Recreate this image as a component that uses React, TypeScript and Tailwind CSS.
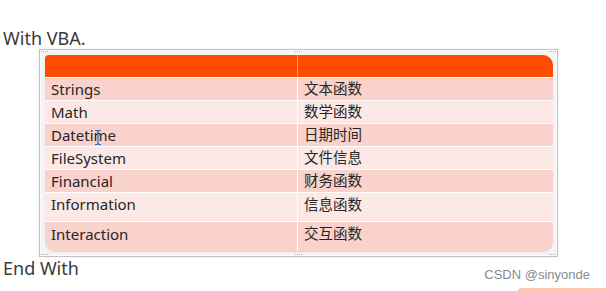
import React from "react";

const rows = [
  { en: "Strings", zh: "文本函数", dark: true, h: "h-[23px]" },
  { en: "Math", zh: "数学函数", dark: false, h: "h-[23px]" },
  { en: "Datetime", zh: "日期时间", dark: true, h: "h-[23px]" },
  { en: "FileSystem", zh: "文件信息", dark: false, h: "h-[23px]" },
  { en: "Financial", zh: "财务函数", dark: true, h: "h-[23px]" },
  { en: "Information", zh: "信息函数", dark: false, h: "h-[29px]", top: true },
  { en: "Interaction", zh: "交互函数", dark: true, h: "h-[30px]", last: true },
];

const font = { fontFamily: '"Noto Sans", "Noto Sans CJK SC", sans-serif' };

// little resize-handle dots on the frame
function Dots({ className }: { className: string }) {
  return (
    <div className={`absolute flex gap-[1px] ${className}`}>
      <span className="w-[1px] h-[1px] bg-[#b5b5b5]" />
      <span className="w-[1px] h-[1px] bg-[#b5b5b5]" />
      <span className="w-[1px] h-[1px] bg-[#b5b5b5]" />
      <span className="w-[1px] h-[1px] bg-[#b5b5b5]" />
    </div>
  );
}

export default function App() {
  return (
    <div
      className="w-[606px] h-[291px] bg-white relative overflow-hidden text-[#262626]"
      style={font}
    >
      <div className="pt-[28px] pl-[3px] h-[49px] text-[18px] leading-[21px] text-[#3a3a3a]">
        With VBA.
      </div>

      {/* frame around the table */}
      <div className="relative ml-[39px] w-[519px] h-[208px] border border-[#c4c4c4] bg-[#f4f4f4] pt-[5px] pl-[5px] shadow-[inset_0_0_0_1px_#fbfbfb,0_0_1px_rgba(0,0,0,0.2)]">
        <Dots className="top-[1px] left-[1px]" />
        <Dots className="top-[1px] left-[255px]" />
        <Dots className="top-[1px] right-[1px]" />
        <Dots className="bottom-[1px] left-[1px]" />
        <Dots className="bottom-[1px] left-[255px]" />
        <Dots className="bottom-[1px] right-[1px]" />

        <div className="w-[508px] rounded-tl-[4px] rounded-tr-[10px] rounded-b-[10px] overflow-hidden shadow-[0_1px_1px_rgba(0,0,0,0.12)]">
          <div className="flex h-[22px] bg-[#fd4b02]">
            <div className="w-[253px] border-r border-[#ff9a70]" />
            <div className="flex-1" />
          </div>
          {rows.map((r) => (
            <div
              key={r.en}
              className={`flex border-t border-white ${r.h} ${
                r.dark ? "bg-[#f8d2cb]" : "bg-[#fce9e5]"
              }`}
            >
              <div
                className={`w-[253px] border-r border-white pl-[6px] flex text-[15px] ${
                  r.top ? "items-start" : "items-center"
                } ${r.last ? "pb-[5px]" : ""}`}
              >
                {r.en}
              </div>
              <div
                className={`flex-1 pl-[6px] flex text-[14.5px] ${
                  r.top ? "items-start pt-[1px]" : "items-center"
                } ${r.last ? "pb-[5px]" : ""}`}
              >
                {r.zh}
              </div>
            </div>
          ))}
        </div>

        {/* text cursor in the Datetime row */}
        <svg
          className="absolute left-[54px] top-[79px]"
          width="8"
          height="17"
          viewBox="0 0 8 17"
        >
          <path
            d="M1 1.5h2l1 1 1-1h2M4 2.5v12M1 15.5h2l1-1 1 1h2"
            fill="none"
            stroke="#2f68b4"
            strokeWidth="1.2"
          />
        </svg>
      </div>

      <div className="pl-[3px] text-[18px] leading-[22px] text-[#3a3a3a]">End With</div>

      <div
        className="absolute right-[16px] top-[265px] text-[13px] text-[#8a8a8a]"
        style={{ fontFamily: '"Liberation Sans", sans-serif' }}
      >
        CSDN @sinyonde
      </div>
      <div className="absolute right-0 bottom-0 w-[88px] h-[3px] bg-[#fac7b2] rounded-tl-[3px]" />
    </div>
  );
}
